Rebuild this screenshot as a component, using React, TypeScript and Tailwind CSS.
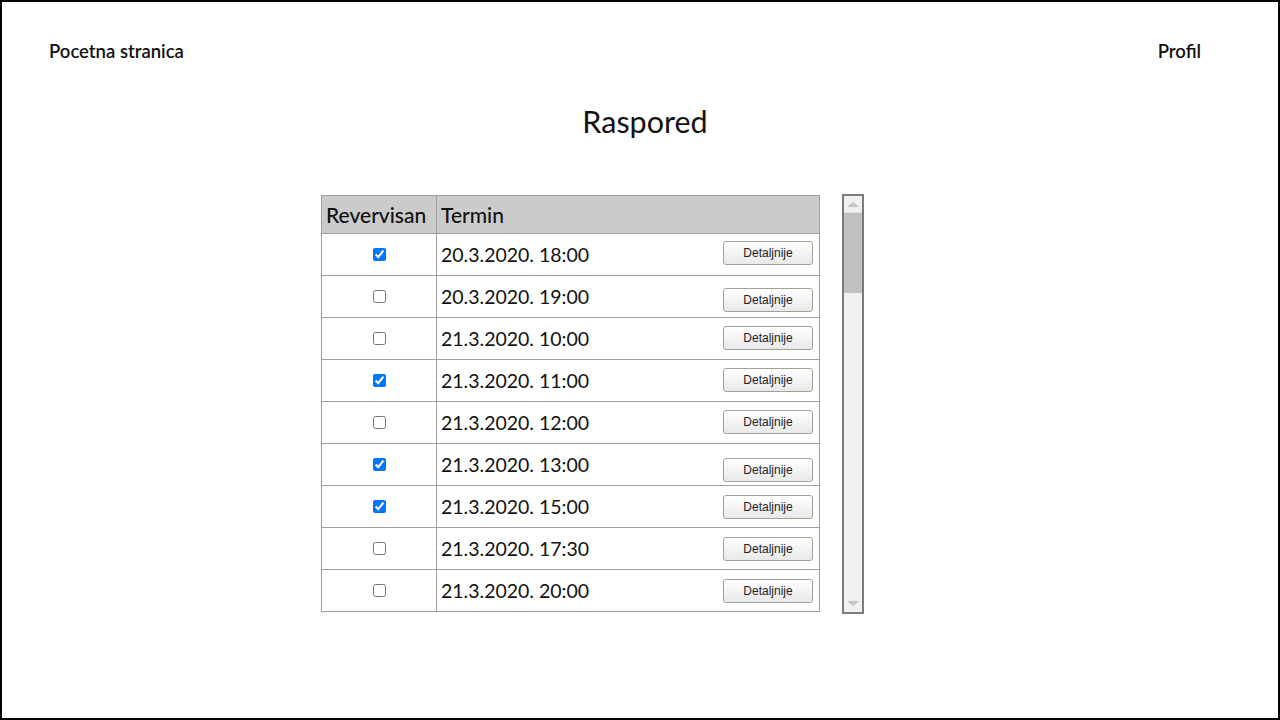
import React from "react";

const rows = [
  { checked: true, termin: "20.3.2020. 18:00", btn: "mt-[7px]" },
  { checked: false, termin: "20.3.2020. 19:00", btn: "mt-[12px]" },
  { checked: false, termin: "21.3.2020. 10:00", btn: "mt-[8px]" },
  { checked: true, termin: "21.3.2020. 11:00", btn: "mt-[8px]" },
  { checked: false, termin: "21.3.2020. 12:00", btn: "mt-[8px]" },
  { checked: true, termin: "21.3.2020. 13:00", btn: "mt-[14px]" },
  { checked: true, termin: "21.3.2020. 15:00", btn: "mt-[9px]" },
  { checked: false, termin: "21.3.2020. 17:30", btn: "mt-[9px]" },
  { checked: false, termin: "21.3.2020. 20:00", btn: "mt-[9px]" },
];

export default function App() {
  return (
    <div
      className="h-[720px] w-[1280px] border-2 border-black bg-white text-[#111]"
      style={{ fontFamily: "Lato, 'Noto Sans', sans-serif" }}
    >
      <div className="flex items-center justify-between pl-[47px] pr-[77px] pt-[37px]">
        <span className="text-[18.5px] font-semibold leading-[24px]">Pocetna stranica</span>
        <span className="text-[18.5px] font-semibold leading-[24px]">Profil</span>
      </div>

      <h1 className="mt-[38px] pl-[10px] text-center text-[30.5px] leading-[40px]">Raspored</h1>

      <div className="mt-[54px] flex items-start pl-[319px]">
        <table className="w-[499px] border-collapse">
          <thead>
            <tr className="h-[38px] bg-[#cbcbcb]">
              <th className="w-[115px] border border-[#a0a0a0] px-[4px] text-left text-[21px] font-medium">Revervisan</th>
              <th className="border border-[#a0a0a0] px-[4px] text-left text-[21px] font-medium">Termin</th>
            </tr>
          </thead>
          <tbody>
            {rows.map((r, i) => (
              <tr key={i} className="h-[42px]">
                <td className="border border-[#a0a0a0] p-0 align-middle">
                  <input type="checkbox" readOnly checked={r.checked} className="mx-auto block h-[13px] w-[13px]" />
                </td>
                <td className="border border-[#a0a0a0] p-0 align-top">
                  <div className="flex h-[41px] items-start justify-between pl-[4px] pr-[6px]">
                    <span className="mt-[8px] text-[19.5px] leading-[26px]">{r.termin}</span>
                    <button
                      className={`${r.btn} h-[24px] w-[90px] rounded-[3px] border border-[#a89f94] bg-gradient-to-b from-white to-[#e9e9e9] text-[12px] text-[#222]`}
                      style={{ fontFamily: "'Liberation Sans', Arial, sans-serif" }}
                    >
                      Detaljnije
                    </button>
                  </div>
                </td>
              </tr>
            ))}
          </tbody>
        </table>

        <div className="ml-[22px] mt-[-1px] flex h-[420px] w-[22px] flex-col border-2 border-[#7b7b7b] bg-[#f1f1f1]">
          <div className="flex h-[17px] items-center justify-center border-b border-[#e0e0e0]">
            <div className="h-0 w-0 border-x-[6px] border-b-[5px] border-x-transparent border-b-[#c4c4c4]" />
          </div>
          <div className="h-[80px] bg-[#c1c1c1]" />
          <div className="flex-1" />
          <div className="flex h-[17px] items-center justify-center">
            <div className="h-0 w-0 border-x-[6px] border-t-[5px] border-x-transparent border-t-[#c4c4c4]" />
          </div>
        </div>
      </div>
    </div>
  );
}
